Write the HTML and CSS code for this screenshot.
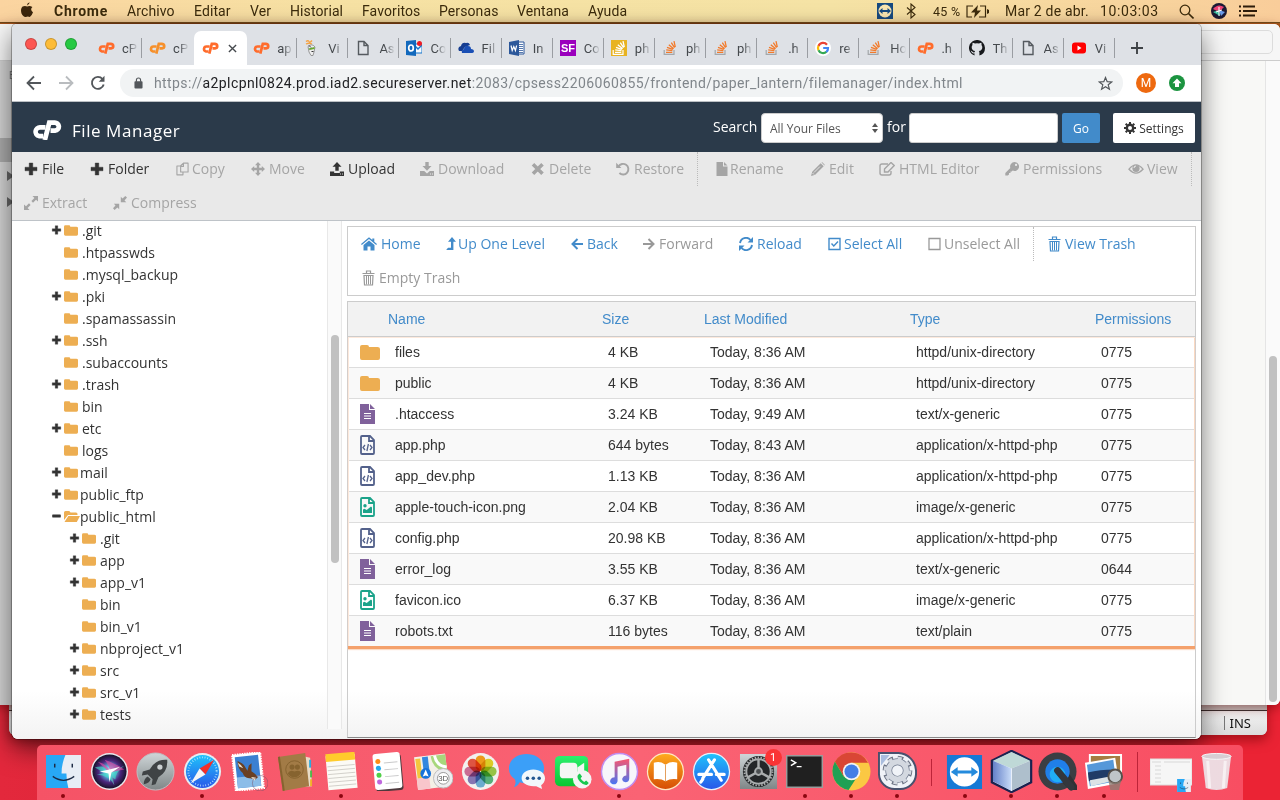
FILE: index.html
```html
<!DOCTYPE html>
<html lang="es">
<head>
<meta charset="utf-8">
<title>File Manager</title>
<link rel="stylesheet" href="styles.css">
</head>
<body>
<svg class="defs" width="0" height="0">
  <defs>
    <symbol id="cp" viewBox="0 0 30 20"><g fill="none" stroke="currentColor"><path d="M13.500 7.400H8a4.400 4.400 0 0 0-1 8.700h4.200" stroke-width="4.600"/><path d="M12.800 20L17.300 2.600h5.200a4 4 0 0 1 .6 8H18.500" stroke-width="4.800"/></g></symbol>
    <symbol id="plus" viewBox="0 0 14 14"><path d="M5.200 1h3.600v4.200H13v3.600H8.800V13H5.200V8.800H1V5.200h4.200z" fill="currentColor" stroke="currentColor" stroke-width=".4" stroke-linejoin="round"/></symbol>
    <symbol id="minus" viewBox="0 0 14 14"><rect x="1" y="5" width="12" height="4" rx=".6" fill="currentColor"/></symbol>
    <symbol id="copy" viewBox="0 0 14 14"><path d="M5 3.500L8 .7h5v9.600H5zM8 .7v3.500H5M5 3.800H1v9.500h6.500v-3" fill="none" stroke="currentColor" stroke-width="1.200" stroke-linejoin="round"/></symbol>
    <symbol id="move" viewBox="0 0 14 14"><path d="M7 0l3 3.200H8.200v2.600h2.600V4L14 7l-3.200 3V8.200H8.200v2.600H10L7 14l-3-3.200h1.800V8.200H3.200V10L0 7l3.200-3v1.800h2.600V3.200H4z" fill="currentColor"/></symbol>
    <symbol id="upload" viewBox="0 0 14 14"><path d="M7 0l4.500 4.800H8.700v4H5.300v-4H2.500zM0 9.500h4.200V11h5.600V9.500H14V14H0z" fill="currentColor"/><path d="M10 12h1M12 12h1" stroke="#fff" stroke-width=".8"/></symbol>
    <symbol id="download" viewBox="0 0 14 14"><path d="M5.300 0h3.400v4h2.800L7 8.800 2.500 4h2.800zM0 9h4.200L7 11.500 9.800 9H14v5H0z" fill="currentColor"/><path d="M10 12h1M12 12h1" stroke="#fff" stroke-width=".8"/></symbol>
    <symbol id="times" viewBox="0 0 14 14"><path d="M2 2.200l9.500 9.500M11.500 2.200L2 11.700" stroke="currentColor" stroke-width="3.600"/></symbol>
    <symbol id="undo" viewBox="0 0 14 14"><path d="M2.500 4.500A5.300 5.300 0 1 1 3.400 11" fill="none" stroke="currentColor" stroke-width="1.900"/><path d="M.2.800v5.200h5.200z" fill="currentColor"/></symbol>
    <symbol id="doc" viewBox="0 0 12 14"><path d="M.5 0H7v4.500h4.500V14H.5zM8 0l3.500 3.500H8z" fill="currentColor"/></symbol>
    <symbol id="pencil" viewBox="0 0 14 14"><path d="M9.700 1.200l3 3-8.500 8.600L0 14l1.200-4.200zM10.500.5Q11 0 11.600.5l1.900 1.900q.5.500 0 1z" fill="currentColor"/><path d="M3 10.500L9 4.500M1.500 11l1.500 1.500" stroke="#fff" stroke-width=".7"/></symbol>
    <symbol id="editor" viewBox="0 0 16 14"><path d="M9 2H3Q1 2 1 4v7q0 2 2 2h7q2 0 2-2V9" fill="none" stroke="currentColor" stroke-width="1.400"/><path d="M5.500 7l6.500-6.500 3.200 3L9 10H5.500z" fill="none" stroke="currentColor" stroke-width="1.400"/></symbol>
    <symbol id="key" viewBox="0 0 14 14"><path d="M9.500 0a4.500 4.500 0 1 1-1.800 8.600L6.800 9.600H5.500V11H4v1.500l-1.200 1H.3v-2.600l5-5A4.500 4.500 0 0 1 9.500 0zM11 1.800a1.100 1.100 0 1 0 .1 2.300 1.100 1.100 0 0 0-.1-2.300z" fill="currentColor" fill-rule="evenodd"/></symbol>
    <symbol id="eye" viewBox="0 0 16 14"><path d="M1 7.200Q8-1.500 15 7.200 8 15 1 7.200z" fill="none" stroke="currentColor" stroke-width="1.300"/><circle cx="8" cy="6.500" r="3.600" fill="currentColor"/><path d="M6 6a2 2 0 0 1 2-2" stroke="#fff" fill="none" stroke-width=".8"/></symbol>
    <symbol id="expand" viewBox="0 0 14 14"><path d="M8.500 0H14v5.500L12 3.700 9 6.700 7.400 5l3-3zM0 8.500L2 10.300l3-3L6.600 9l-3 3 1.900 2H0z" fill="currentColor"/></symbol>
    <symbol id="shrink" viewBox="0 0 14 14"><path d="M7.800.8l1.700 1.700L12.300 0 14 1.600l-2.500 2.900 1.800 1.700H7.800zM.8 7.800h5.400v5.400l-1.800-1.700L1.600 14 0 12.300l2.500-2.800z" fill="currentColor"/></symbol>
    <symbol id="home" viewBox="0 0 16 14"><path d="M8 3.600l5.500 4.500V13.500H9.500V9.500h-3v4h-4V8.100zM8 .3l3.300 2.700V1.500h2V4.700L16 7l-.8 1L8 2 .8 8 0 7z" fill="currentColor"/></symbol>
    <symbol id="levelup" viewBox="0 0 10 14"><path d="M6 0l4 4.700H7.400V13H.2l1.800-2.200H5V4.700H2z" fill="currentColor"/></symbol>
    <symbol id="left" viewBox="0 0 12 12"><path d="M6.500 1L1.500 6l5 5M2 6h10" fill="none" stroke="currentColor" stroke-width="2"/></symbol>
    <symbol id="right" viewBox="0 0 12 12"><path d="M5.500 1l5 5-5 5M10 6H0" fill="none" stroke="currentColor" stroke-width="2"/></symbol>
    <symbol id="reload" viewBox="0 0 14 14"><path d="M1 6A6 6 0 0 1 11.500 3M13 8A6 6 0 0 1 2.500 11" fill="none" stroke="currentColor" stroke-width="1.900"/><path d="M14 0v5.500H8.500zM0 14V8.500h5.500z" fill="currentColor"/></symbol>
    <symbol id="check" viewBox="0 0 13 13"><path d="M1 1h11v11H1zM3.500 6l2.300 2.500L10 4" fill="none" stroke="currentColor" stroke-width="1.400"/></symbol>
    <symbol id="square" viewBox="0 0 13 13"><path d="M1 1h11v11H1z" fill="none" stroke="currentColor" stroke-width="1.300"/></symbol>
    <symbol id="trash" viewBox="0 0 12 16"><path d="M0 3.500h12M4 3V1h4v2M1.500 5.500h9L10 15H2z" fill="none" stroke="currentColor" stroke-width="1.200"/><path d="M4 6v8.500M6 6v8.500M8 6v8.500" stroke="currentColor" stroke-width="1"/></symbol>
    <symbol id="folder" viewBox="0 0 20 15"><path d="M0 2Q0 0 2 0h5q2 0 2 2h8.500q2.500 0 2.500 2v9q0 2-2 2H2q-2 0-2-2z" fill="#edae52"/></symbol>
    <symbol id="open" viewBox="0 0 16 11"><path d="M0 9V1.500Q0 0 1.500 0H5q1 0 1.500 1.500H12q1.500 0 1.500 1.500v1H4z" fill="#edae52"/><path d="M4.300 5H16l-3.200 6H.5z" fill="#edae52"/></symbol>
    <symbol id="ftext" viewBox="0 0 15 20"><path d="M0 0h9v6h6v14H0zM10 0l5 5h-5z" fill="#80619b"/><path d="M4 9.500h7M4 12h7M4 14.500h7" stroke="#fff" stroke-width="1"/></symbol>
    <symbol id="fcode" viewBox="0 0 15 20"><path d="M1 2Q1 1 2 1h8l4 4v13q0 1-1 1H2q-1 0-1-1zM9 1v5h5" fill="none" stroke="#53618b" stroke-width="1.800"/><path d="M5 10l-2 2.500L5 15M10 10l2 2.500-2 2.500M8.400 9l-1.500 7" fill="none" stroke="#53618b" stroke-width="1.300"/></symbol>
    <symbol id="fimg" viewBox="0 0 15 20"><path d="M1 2Q1 1 2 1h8l4 4v13q0 1-1 1H2q-1 0-1-1zM9 1v5h5" fill="none" stroke="#1ba38a" stroke-width="1.800"/><circle cx="5" cy="8.800" r="1.700" fill="#1ba38a"/><path d="M3 16v-3.500l1.500-.8 2.200 1.300 4.300-3.500 1 1V16z" fill="#1ba38a"/></symbol>
    <symbol id="page" viewBox="0 0 16 16"><path d="M3.500 1.500H9l4 4v9H3.500zM9 1.500v4h4" fill="none" stroke="#555a5f" stroke-width="1.400"/></symbol>
    <symbol id="so" viewBox="0 0 16 16"><path d="M2.200 10v4.300h9.800V10" fill="none" stroke="var(--base)" stroke-width="1.200"/><path d="M4 12.300h6.300M4.200 9.800l6.200.8M5 7.300l5.800 2M6.800 4.700l4.800 4M9.300 2.600l3.300 5M12 1.200l1.300 6" stroke="var(--bars)" stroke-width="1.300"/></symbol>
    <symbol id="smile" viewBox="0 0 36 34"><path d="M0 0h36v34H0z" fill="#e7edf5"/><path d="M0 0h20q-4 9-4 19h5q0 8 2 15H0z" fill="#28a8f5"/><path d="M9 9v4M27 9v4" stroke="#1c2a44" stroke-width="1.500"/><path d="M7 22q11 8 22 0" fill="none" stroke="#1c2a44" stroke-width="1.300"/></symbol>
    <linearGradient id="gBlue" x2="0" y2="1"><stop stop-color="#1fc3fb"/><stop offset="1" stop-color="#2857e9"/></linearGradient>
    <linearGradient id="gOrange" x2="0" y2="1"><stop stop-color="#ffac1e"/><stop offset="1" stop-color="#d54c05"/></linearGradient>
    <linearGradient id="gGreen" x2="0" y2="1"><stop stop-color="#2bf06e"/><stop offset="1" stop-color="#0ac632"/></linearGradient>
    <linearGradient id="gGrey" x2="0" y2="1"><stop stop-color="#cfd6d8"/><stop offset="1" stop-color="#7f8687"/></linearGradient>
    <linearGradient id="gNote" x2="0" y2="1"><stop stop-color="#f9566f"/><stop offset="1" stop-color="#4676f4"/></linearGradient>
    <linearGradient id="gCube" x2="1"><stop stop-color="#6480c8"/><stop offset="1" stop-color="#c9dcf8"/></linearGradient>
    <radialGradient id="gSiri"><stop stop-color="#fff"/><stop offset=".3" stop-color="#5bc0e6"/><stop offset=".65" stop-color="#4b267c"/><stop offset="1" stop-color="#171229"/></radialGradient>
  </defs>
</svg>

<div class="desktop">
  <header class="menubar">
    <svg class="apple" viewBox="0 0 14 16"><path d="M9.600.2Q9.400 2.900 6.900 3.500 7 .9 9.600.2zM7.200 4.500Q9.500 3.200 12.400 5q-2.800 2.500.6 5.300-1.200 3.700-3.200 4.700-2-.8-4 0Q3.400 15.400 1.400 11.200.2 6.700 2.600 4.600q2.200-1.300 4.600-.1z" fill="#3c260c"/></svg>
    <nav class="menus"><b>Chrome</b><span>Archivo</span><span>Editar</span><span>Ver</span><span>Historial</span><span>Favoritos</span><span>Personas</span><span>Ventana</span><span>Ayuda</span></nav>
    <div class="status">
      <svg width="16" height="16" viewBox="0 0 16 16"><path d="M0 0h16v16H0z" fill="#174a80"/><circle cx="8" cy="8" r="6.500" fill="#fae5b0"/><path d="M2 8l3.500-3v2h5V5L14 8l-3.500 3V9h-5v2z" fill="#174a80"/></svg>
      <svg width="10" height="16" viewBox="0 0 10 16"><path d="M1 4.500l8 7-4 3.500V1l4 3.500-8 7" fill="none" stroke="#3c2b0c" stroke-width="1.100"/></svg>
      <span class="pct">45 %</span>
      <svg width="23" height="13" viewBox="0 0 23 13"><path d="M7 1H1v11h5M14 1h5.500v11H13" fill="none" stroke="#3c2b0c" stroke-width="1.200"/><path d="M12 0L5 7.500h4L8 13l7-7.500h-4zM21 4v5l2-1V5z" fill="#3c2b0c"/></svg>
      <span class="day">Mar 2 de abr.</span><span class="clock">10:03:03</span>
      <svg width="15" height="15" viewBox="0 0 15 15"><circle cx="6" cy="6" r="4.800" fill="none" stroke="#3c2b0c" stroke-width="1.300"/><path d="M9.500 9.500l5 5" stroke="#3c2b0c" stroke-width="1.600"/></svg>
      <svg width="16" height="16" viewBox="0 0 16 16"><circle cx="8" cy="8" r="8" fill="#1c1a33"/><path d="M2 6Q7 0 13 4L8 9z" fill="#ef4275"/><path d="M2 9l6-2 1 6z" fill="#38bd9c"/><path d="M8 7l6 2-4 4z" fill="#6b9be9"/><path d="M8 4v9M5 9l6-2" stroke="#fff"/></svg>
      <svg width="18" height="12" viewBox="0 0 18 12"><path d="M0 1.500h2M0 6h2M0 10.500h2M4 1.500h12M4 6h14M4 10.500h12" stroke="#2d1c0b" stroke-width="2"/></svg>
    </div>
  </header>

  <section class="win ide"><footer><i></i>INS</footer></section>
  <section class="win paper">
    <div class="ptop"><div class="field"></div></div>
    <div class="pbody"><div class="sliver"><em>E</em><b></b><i></i><i></i></div><div class="ptrack"><span></span></div></div>
  </section>

  <main class="win chrome">
    <div class="tabs">
      <div class="lights"><i></i><i></i><i></i></div>
      <div class="tab"><svg class="cpi"><use href="#cp"/></svg><span>cP</span></div>
      <div class="tab noline"><svg class="cpi amber"><use href="#cp"/></svg><span>cP</span></div>
      <div class="tab active"><svg class="cpi"><use href="#cp"/></svg><svg class="close" viewBox="0 0 10 10"><path d="M1 1l8 8M9 1L1 9" stroke="#45494d" stroke-width="1.500"/></svg></div>
      <div class="tab"><svg class="cpi"><use href="#cp"/></svg><span>ap</span></div>
      <div class="tab"><svg viewBox="0 0 16 16"><path d="M2 1.500q2-1.500 3 0t3-1M2 4q3-1.500 6 0" stroke="#f5a344" fill="none" stroke-width="1.300"/><path d="M4 6.500q4-3.500 7 .5l-1 5-1 3.500H7L5 12z" fill="#eee" stroke="#777" stroke-width=".7"/><path d="M4.500 8.500l6-1.500v2l-5 1z" fill="#67a82f"/><path d="M7.500 11.500h2M5 5.500l2 2" stroke="#333"/></svg><span>Vi</span></div>
      <div class="tab"><svg><use href="#page"/></svg><span>As</span></div>
      <div class="tab"><svg viewBox="0 0 16 16"><path d="M8 4h8v9H8z" fill="#f6fbff" stroke="#1675ca"/><path d="M8 5l4 4 4-4" fill="none" stroke="#1675ca" stroke-width="1.500"/><path d="M0 1l10-1v16L0 15z" fill="#1269bd"/><ellipse cx="5" cy="8" rx="2.300" ry="3" fill="none" stroke="#fff" stroke-width="1.700"/><circle cx="13.500" cy="3.500" r="2.500" fill="#ed1c24"/></svg><span>Co</span></div>
      <div class="tab"><svg viewBox="0 0 16 16"><path d="M1 11q-2-4 2-5 1-4 5-3 3-1 4 2l-5 2-3 4z" fill="#153d91"/><path d="M4 13q-1-3 2-4 1-4 4-3 3 0 3 3 3 0 3 2.500-.5 1.500-2 1.500z" fill="#1a4fb5"/></svg><span>Fil</span></div>
      <div class="tab"><svg viewBox="0 0 16 16"><path d="M9 2h6v12H9z" fill="#fff" stroke="#2b579a"/><path d="M10 4.500h4M10 6.500h4M10 8.500h4M10 10.500h4M10 12.500h4" stroke="#2b579a" stroke-width=".8"/><path d="M0 2l10-2v16L0 14z" fill="#2b579a"/><path d="M2 5.500l1.200 5 1.600-4 1.600 4 1.200-5" fill="none" stroke="#fff" stroke-width="1.200"/></svg><span>In</span></div>
      <div class="tab"><svg viewBox="0 0 16 16"><path d="M0 0h16v16H0z" fill="#9b00bd"/><text x="8" y="12.300" text-anchor="middle" class="sf">SF</text></svg><span>Co</span></div>
      <div class="tab"><svg class="gold"><use href="#so"/></svg><span>ph</span></div>
      <div class="tab"><svg class="so"><use href="#so"/></svg><span>ph</span></div>
      <div class="tab"><svg class="so"><use href="#so"/></svg><span>ph</span></div>
      <div class="tab"><svg class="so"><use href="#so"/></svg><span>.h</span></div>
      <div class="tab"><svg viewBox="0 0 16 16"><circle cx="8" cy="8" r="8" fill="#fff"/><g fill="none" stroke-width="2.200"><path d="M12 4.700A5 5 0 0 0 3.500 6" stroke="#ea4335"/><path d="M3.500 5.800a5 5 0 0 0 0 4.400" stroke="#fbbc05"/><path d="M3.500 10.200a5 5 0 0 0 8 1.500" stroke="#34a853"/><path d="M11.300 12A5 5 0 0 0 13 8H8.200" stroke="#4285f4"/></g></svg><span>re</span></div>
      <div class="tab"><svg class="so"><use href="#so"/></svg><span>Ho</span></div>
      <div class="tab"><svg class="cpi"><use href="#cp"/></svg><span>.h</span></div>
      <div class="tab"><svg viewBox="0 0 16 16"><path d="M5.500 15.600v-2.300q-2.300.7-3-1.300-.4-.8-1-1.200 1.300-.2 2 1 .7.900 2.100.5.100-.9.600-1.300Q2.700 10.500 2.700 7.200q0-1.300.8-2.200-.3-1.200.2-2.300 1.100 0 2.300.9 2-.5 4 0 1.200-.9 2.300-.9.500 1.200.1 2.300.9.900.9 2.200 0 3.300-3.500 3.800.6.500.6 1.600v3Q16 14 16 8A8 8 0 1 0 5.500 15.600z" fill="#17191c"/></svg><span>Th</span></div>
      <div class="tab"><svg><use href="#page"/></svg><span>As</span></div>
      <div class="tab"><svg viewBox="0 0 16 16"><rect x="1" y="2.500" width="14" height="11" rx="3" fill="#f00"/><path d="M6.500 5.500v5l4-2.500z" fill="#fff"/></svg><span>Vi</span></div>
      <svg class="newtab" viewBox="0 0 12 12"><path d="M6 0v12M0 6h12" stroke="#3e4246" stroke-width="1.900"/></svg>
    </div>
    <div class="address">
      <svg width="16" height="16" viewBox="0 0 16 16"><path d="M8 1.500L1.500 8 8 14.500M2 8h13" fill="none" stroke="#53575b" stroke-width="1.800"/></svg>
      <svg width="16" height="16" viewBox="0 0 16 16"><path d="M8 1.500L14.500 8 8 14.500M14 8H1" fill="none" stroke="#b9bcbf" stroke-width="1.800"/></svg>
      <svg width="16" height="16" viewBox="0 0 16 16"><path d="M13.700 9.500A6 6 0 1 1 12.500 4" fill="none" stroke="#53575b" stroke-width="1.900"/><path d="M14.500.8v6H8.700z" fill="#53575b"/></svg>
      <div class="url"><svg width="9" height="12" viewBox="0 0 10 13"><rect x=".5" y="4.500" width="9" height="8" rx="1" fill="#53575b"/><path d="M2.700 5V3.200a2.300 2.300 0 0 1 4.600 0V5" fill="none" stroke="#53575b" stroke-width="1.300"/></svg><p>https://<b>a2plcpnl0824.prod.iad2.secureserver.net</b>:2083/cpsess2206060855/frontend/paper_lantern/filemanager/index.html</p><svg width="15" height="15" viewBox="0 0 15 15"><path d="M7.500 1.500l1.700 4.200 4.500.3-3.500 2.800 1.200 4.400-3.900-2.500-3.900 2.500 1.200-4.400L1.300 6l4.500-.3z" fill="none" stroke="#53575b" stroke-width="1.200"/></svg></div>
      <span class="avatar">M</span>
      <svg width="16" height="16" viewBox="0 0 16 16"><circle cx="8" cy="8" r="8" fill="#1c9440"/><path d="M8 3.500l4.500 4.800H10V12H6V8.300H3.500z" fill="#fff"/></svg>
    </div>
    <div class="head">
      <svg class="logo"><use href="#cp"/></svg><h1>File Manager</h1>
      <label>Search</label><div class="select">All Your Files<svg width="6" height="10" viewBox="0 0 6 10"><path d="M3 0l3 4H0zM3 10l3-4H0z" fill="#555"/></svg></div><label class="for">for</label><div class="input"></div><div class="go">Go</div>
      <div class="settings"><svg width="12" height="12" viewBox="0 0 12 12"><circle cx="6" cy="6" r="3.200" fill="none" stroke="#333" stroke-width="2.400"/><path d="M6 0v2M6 10v2M0 6h2M10 6h2M1.700 1.700l1.500 1.500M8.800 8.800l1.500 1.500M10.300 1.700L8.800 3.200M3.200 8.800l-1.500 1.500" stroke="#333" stroke-width="2"/></svg>Settings</div>
    </div>
    <div class="toolbar">
      <div class="row one">
        <span class="on"><svg><use href="#plus"/></svg>File</span><span class="on"><svg><use href="#plus"/></svg>Folder</span><span class="n16"><svg><use href="#copy"/></svg>Copy</span><span><svg><use href="#move"/></svg>Move</span><span class="on"><svg><use href="#upload"/></svg>Upload</span><span><svg><use href="#download"/></svg>Download</span><span><svg><use href="#times"/></svg>Delete</span><span><svg><use href="#undo"/></svg>Restore</span><span class="n14 dot"><svg><use href="#doc"/></svg>Rename</span><span><svg><use href="#pencil"/></svg>Edit</span><span class="n20"><svg><use href="#editor"/></svg>HTML Editor</span><span><svg><use href="#key"/></svg>Permissions</span><span class="n19"><svg><use href="#eye"/></svg>View</span><i></i>
      </div>
      <div class="row two"><span><svg><use href="#expand"/></svg>Extract</span><span><svg><use href="#shrink"/></svg>Compress</span></div>
    </div>
    <div class="work">
      <aside>
        <ul>
          <li><svg class="pm"><use href="#plus"/></svg><svg><use href="#folder"/></svg>.git</li>
          <li class="leaf"><svg><use href="#folder"/></svg>.htpasswds</li>
          <li class="leaf"><svg><use href="#folder"/></svg>.mysql_backup</li>
          <li><svg class="pm"><use href="#plus"/></svg><svg><use href="#folder"/></svg>.pki</li>
          <li class="leaf"><svg><use href="#folder"/></svg>.spamassassin</li>
          <li><svg class="pm"><use href="#plus"/></svg><svg><use href="#folder"/></svg>.ssh</li>
          <li class="leaf"><svg><use href="#folder"/></svg>.subaccounts</li>
          <li><svg class="pm"><use href="#plus"/></svg><svg><use href="#folder"/></svg>.trash</li>
          <li class="leaf"><svg><use href="#folder"/></svg>bin</li>
          <li><svg class="pm"><use href="#plus"/></svg><svg><use href="#folder"/></svg>etc</li>
          <li class="leaf"><svg><use href="#folder"/></svg>logs</li>
          <li class="near"><svg class="pm"><use href="#plus"/></svg><svg><use href="#folder"/></svg>mail</li>
          <li class="near"><svg class="pm"><use href="#plus"/></svg><svg><use href="#folder"/></svg>public_ftp</li>
          <li class="near"><svg class="pm"><use href="#minus"/></svg><svg class="opened"><use href="#open"/></svg>public_html</li>
        </ul>
        <ul class="sub">
          <li><svg class="pm"><use href="#plus"/></svg><svg><use href="#folder"/></svg>.git</li>
          <li><svg class="pm"><use href="#plus"/></svg><svg><use href="#folder"/></svg>app</li>
          <li><svg class="pm"><use href="#plus"/></svg><svg><use href="#folder"/></svg>app_v1</li>
          <li class="leaf"><svg><use href="#folder"/></svg>bin</li>
          <li class="leaf"><svg><use href="#folder"/></svg>bin_v1</li>
          <li><svg class="pm"><use href="#plus"/></svg><svg><use href="#folder"/></svg>nbproject_v1</li>
          <li><svg class="pm"><use href="#plus"/></svg><svg><use href="#folder"/></svg>src</li>
          <li><svg class="pm"><use href="#plus"/></svg><svg><use href="#folder"/></svg>src_v1</li>
          <li><svg class="pm"><use href="#plus"/></svg><svg><use href="#folder"/></svg>tests</li>
        </ul>
      </aside>
      <div class="track"><span></span></div>
      <div class="content">
        <div class="actions">
          <div class="row"><span class="n20"><svg><use href="#home"/></svg>Home</span><span class="n13"><svg><use href="#levelup"/></svg>Up One Level</span><span class="n16 small"><svg><use href="#left"/></svg>Back</span><span class="n17 small off"><svg><use href="#right"/></svg>Forward</span><span><svg><use href="#reload"/></svg>Reload</span><span class="n16"><svg><use href="#check"/></svg>Select All</span><span class="n16 off"><svg><use href="#square"/></svg>Unselect All</span><span class="n17 dot tall"><svg><use href="#trash"/></svg>View Trash</span></div>
          <div class="row lower"><span class="n17 off tall"><svg><use href="#trash"/></svg>Empty Trash</span></div>
        </div>
        <div class="list">
          <div class="th"><span>Name</span><span>Size</span><span>Last Modified</span><span>Type</span><span>Permissions</span></div>
          <div class="rows">
            <div class="tr dir"><svg><use href="#folder"/></svg><span>files</span><span>4 KB</span><span>Today, 8:36 AM</span><span>httpd/unix-directory</span><span>0775</span></div>
            <div class="tr dir"><svg><use href="#folder"/></svg><span>public</span><span>4 KB</span><span>Today, 8:36 AM</span><span>httpd/unix-directory</span><span>0775</span></div>
            <div class="tr"><svg><use href="#ftext"/></svg><span>.htaccess</span><span>3.24 KB</span><span>Today, 9:49 AM</span><span>text/x-generic</span><span>0775</span></div>
            <div class="tr"><svg><use href="#fcode"/></svg><span>app.php</span><span>644 bytes</span><span>Today, 8:43 AM</span><span>application/x-httpd-php</span><span>0775</span></div>
            <div class="tr"><svg><use href="#fcode"/></svg><span>app_dev.php</span><span>1.13 KB</span><span>Today, 8:36 AM</span><span>application/x-httpd-php</span><span>0775</span></div>
            <div class="tr"><svg><use href="#fimg"/></svg><span>apple-touch-icon.png</span><span>2.04 KB</span><span>Today, 8:36 AM</span><span>image/x-generic</span><span>0775</span></div>
            <div class="tr"><svg><use href="#fcode"/></svg><span>config.php</span><span>20.98 KB</span><span>Today, 8:36 AM</span><span>application/x-httpd-php</span><span>0775</span></div>
            <div class="tr"><svg><use href="#ftext"/></svg><span>error_log</span><span>3.55 KB</span><span>Today, 8:36 AM</span><span>text/x-generic</span><span>0644</span></div>
            <div class="tr"><svg><use href="#fimg"/></svg><span>favicon.ico</span><span>6.37 KB</span><span>Today, 8:36 AM</span><span>image/x-generic</span><span>0775</span></div>
            <div class="tr"><svg><use href="#ftext"/></svg><span>robots.txt</span><span>116 bytes</span><span>Today, 8:36 AM</span><span>text/plain</span><span>0775</span></div>
          </div>
        </div>
      </div>
    </div>
  </main>

  <footer class="dock">
    <div class="app run"><svg viewBox="0 0 40 40"><svg x="2" y="3" width="36" height="34"><use href="#smile"/></svg></svg></div>
    <div class="app"><svg viewBox="0 0 40 40"><circle cx="20" cy="20" r="19" fill="#e8e8ee"/><circle cx="20" cy="20" r="17.500" fill="url(#gSiri)"/><path d="M5 16q15-6 20 18-5-10-18-11 14-1 28-9-9 7-9 14z" fill="#43dbc4" opacity=".65"/><path d="M8 10q16 4 16 26-1-18-9-28 12 4 20 10l-15 3z" fill="#e04aa4" opacity=".65"/><path d="M10 20l10-2 11-3-9 6-2 10-1-9z" fill="#fff"/></svg></div>
    <div class="app"><svg viewBox="0 0 40 40"><circle cx="20" cy="20" r="19" fill="url(#gGrey)" stroke="#bdbec2"/><path d="M32 8Q20 7 14 18l-7 2-1 4 6-1 5 5-1 6 4-1 3-7Q33 20 32 8zM12 25q-4 2-4 8 6-1 7-5z" fill="#3f4345"/><circle cx="24.500" cy="15.500" r="2.700" fill="#cbd0d2"/></svg></div>
    <div class="app run"><svg viewBox="0 0 40 40"><circle cx="20" cy="20" r="19" fill="#e6edf1"/><circle cx="20" cy="20" r="17" fill="url(#gBlue)"/><circle cx="20" cy="20" r="14.500" fill="none" stroke="#c8efff" stroke-width="2" stroke-dasharray=".7 2"/><path d="M32 8L17 17l6 6z" fill="#f22f29"/><path d="M8 32l9-15 6 6z" fill="#f5f6f7"/></svg></div>
    <div class="app"><svg viewBox="0 0 40 40"><g transform="rotate(-6 20 20)"><path d="M5 1.500h29v37H5z" fill="#fff" stroke="#fff" stroke-width="2" stroke-dasharray="1.500 1"/><path d="M7.500 4h24v32h-24z" fill="#3b80d1"/><path d="M7.500 25h24v11h-24z" fill="#8cbde8"/><path d="M10 8q4 2 6 5l3 6 2-5 3-2-1 8q4 3 6 7l-3 2-5-2q-6 0-7-6-5-5-4-13z" fill="#6a4022"/><path d="M10 10q3 2 5 6l-4-2zM22 26l5 1-2 3z" fill="#eadfca"/></g><circle cx="32" cy="32" r="8" fill="none" stroke="#7b5268" opacity=".5"/></svg></div>
    <div class="app"><svg viewBox="0 0 40 40"><path d="M28 4l8 2 2 29-8 1z" fill="#e9dcc6"/><path d="M35 8h2v8h-2z" fill="#2ea8dc"/><path d="M36 19h2v7h-2z" fill="#4fb94a"/><path d="M36 28h2v7h-2z" fill="#f1b228"/><path d="M3 5l28-4 4 34-27 5z" fill="#a27b46"/><path d="M3 5l2-.5 5 35-2 .5z" fill="#86632f"/><circle cx="20" cy="18" r="9" fill="none" stroke="#86632f"/><circle cx="17.500" cy="15.500" r="2.600" fill="#86632f"/><circle cx="23" cy="15.500" r="2.600" fill="#86632f"/><path d="M13 22q2-4 7-2 5-2 7 1-3 5-7 5t-7-4z" fill="#86632f"/></svg></div>
    <div class="app run"><svg viewBox="0 0 40 40"><g transform="rotate(-5 20 20)"><path d="M5 3h30v35H5z" fill="#fbfaf5"/><path d="M5 1h30v8H5z" fill="#ffcc2c"/><path d="M6 14h28M6 18h28M6 22h28M6 26h28M6 30h28M6 34h28" stroke="#c8c6c0" stroke-width=".8"/></g></svg></div>
    <div class="app"><svg viewBox="0 0 40 40"><g transform="rotate(-5 20 20)"><rect x="7" y="3" width="28" height="37" rx="3" fill="#4e393d"/><rect x="6" y="1" width="28" height="37" rx="3" fill="#fff"/><circle cx="11" cy="9" r="2.600" fill="#ff8b16"/><circle cx="11" cy="16" r="2.600" fill="#24a7ed"/><circle cx="11" cy="23" r="2.600" fill="#51cf48"/><circle cx="11" cy="30" r="2.600" fill="#bf67dd"/><path d="M17 11h14M17 18h14M17 25h14M17 32h14" stroke="#c9c9ca"/></g></svg></div>
    <div class="app"><svg viewBox="0 0 40 40"><g transform="rotate(-7 20 20)"><path d="M2 3h32v34H2z" fill="#f4f0e6"/><path d="M3 5h5v30H3z" fill="#f4c63e"/><path d="M10 4h6v20h-6z" fill="#3388df"/><path d="M19 4h15v17Q20 20 19 4z" fill="#a8d77b"/><path d="M23 4q1 11 11 13" fill="none" stroke="#fff" stroke-width="3"/><path d="M2 25h13v12H2z" fill="#f8c6cb"/></g><circle cx="12" cy="22" r="5.500" fill="#1772da"/><path d="M12 18l3 7-3-1-3 1z" fill="#fff"/><circle cx="30" cy="27" r="10" fill="#eeeef0" stroke="#bbb"/><circle cx="30" cy="27" r="6" fill="#fff" stroke="#999"/><text x="30" y="30" text-anchor="middle" class="three">3D</text></svg></div>
    <div class="app"><svg viewBox="0 0 40 40"><circle cx="20" cy="20" r="19" fill="#f2f1ef"/><g class="petals"><rect x="15" y="3.500" width="10" height="16" rx="5" fill="#faa21b"/><rect x="15" y="3.500" width="10" height="16" rx="5" fill="#e7d829" transform="rotate(45 20 20)"/><rect x="15" y="3.500" width="10" height="16" rx="5" fill="#9fce4a" transform="rotate(90 20 20)"/><rect x="15" y="3.500" width="10" height="16" rx="5" fill="#5bba81" transform="rotate(135 20 20)"/><rect x="15" y="3.500" width="10" height="16" rx="5" fill="#70b5dd" transform="rotate(180 20 20)"/><rect x="15" y="3.500" width="10" height="16" rx="5" fill="#8c7cbe" transform="rotate(225 20 20)"/><rect x="15" y="3.500" width="10" height="16" rx="5" fill="#d4739d" transform="rotate(270 20 20)"/><rect x="15" y="3.500" width="10" height="16" rx="5" fill="#ea5a46" transform="rotate(315 20 20)"/></g></svg></div>
    <div class="app"><svg viewBox="0 0 40 40"><path d="M20 2c10 0 18 6 18 15s-8 15-18 15q-4 0-7-1-2 4-6 5 3-4 1-8-6-4-6-11C2 8 10 2 20 2z" fill="#3b9ff8"/><path d="M27 18c7 0 12 4 12 9 0 3-2 6-4 7l1 4-6-3c-9 1-15-3-15-8s5-9 12-9z" fill="#f2f7fb"/><g fill="#235691"><circle cx="21" cy="27" r="1.800"/><circle cx="27" cy="27" r="1.800"/><circle cx="33" cy="27" r="1.800"/></g></svg></div>
    <div class="app"><svg viewBox="0 0 40 40"><rect x="2" y="4" width="34" height="31" rx="5" fill="url(#gGreen)"/><rect x="7" y="11" width="18" height="16" rx="4" fill="#f3f6f4"/><path d="M25 16l7-5v14l-7-3z" fill="#f3f6f4"/><circle cx="30" cy="28" r="9.500" fill="#f4f4f4"/><path d="M25.500 23.500l2-1.500 2.300 3-1.500 2q1 2.500 3.700 3.700l2-1.500 2.700 2.500-1.700 2q-3 1-7-3-4-4-2.500-7.200z" fill="#18c950"/></svg></div>
    <div class="app run"><svg viewBox="0 0 40 40"><circle cx="20" cy="20" r="18.500" fill="#f7f6fb" stroke="#c08df0" stroke-width="1.500"/><path d="M15 10l15-3v20q0 4-4 4-4-1-3-4 1-3 4-3V13l-9 2v15q-1 4-5 3-4-1-2-5 1-2 4-2z" fill="url(#gNote)"/></svg></div>
    <div class="app"><svg viewBox="0 0 40 40"><circle cx="20" cy="20" r="18.500" fill="url(#gOrange)" stroke="#ffe5c1" stroke-width="1.300"/><path d="M20 13q-5-4-12-2v17q7-1 12 2 5-3 12-2V11q-7-2-12 2z" fill="#fff"/><path d="M20 13v17" stroke="#e39c58"/></svg></div>
    <div class="app"><svg viewBox="0 0 40 40"><circle cx="20" cy="20" r="18.500" fill="url(#gBlue)" stroke="#e5f1fc" stroke-width="1.300"/><path d="M17 8l13 21M23 8L11 27M7 23h13M25 23h8M9 31l2-3" fill="none" stroke="#fff" stroke-width="3.200" stroke-linecap="round"/></svg></div>
    <div class="app"><svg viewBox="0 0 40 40"><path d="M1 2h38v36H1z" fill="url(#gGrey)"/><circle cx="20" cy="20" r="16" fill="#242729"/><circle cx="20" cy="20" r="12.500" fill="none" stroke="#a9adae" stroke-width="2"/><circle cx="20" cy="20" r="14.300" fill="none" stroke="#a9adae" stroke-width="2" stroke-dasharray="1.500 1.500"/><path d="M20 20V8M20 20L9 26M20 20l11 6" stroke="#a9adae" stroke-width="2.500"/><circle cx="20" cy="20" r="3.500" fill="#4b4f51" stroke="#a9adae" stroke-width="2"/></svg><b class="badge">1</b></div>
    <div class="app run"><svg viewBox="0 0 40 40"><path d="M1 3h38v34H1z" fill="#9b9b9b"/><path d="M2.500 4.500h35v31h-35z" fill="#202020"/><path d="M6 8l5 3-5 3" fill="none" stroke="#fff" stroke-width="1.500"/><path d="M12 15h5" stroke="#fff" stroke-width="1.300"/></svg></div>
    <div class="app run"><svg viewBox="0 0 40 40"><circle cx="20" cy="20" r="19.500" fill="#fbc843"/><path d="M3 10a19.500 19.500 0 0 1 34 1H20l-8 14z" fill="#d94635"/><path d="M3 10a19.500 19.500 0 0 0 14 29l9-14H12z" fill="#20a054"/><circle cx="20" cy="20" r="9" fill="#f4f4f4"/><circle cx="20" cy="20" r="7.200" fill="#437ee5"/></svg></div>
    <div class="app run"><svg viewBox="0 0 40 40"><path d="M1 1h20a19 19 0 0 1 18 18v4a16 16 0 0 1-16 15h-6A16 16 0 0 1 1 23z" fill="#f0f3f8" stroke="#48516d" stroke-width="2"/><path d="M3 3h9L3 14z" fill="#a9bdde"/><circle cx="20" cy="19" r="13" fill="none" stroke="#6d7484" stroke-width="4.500" stroke-dasharray="5.500 4.700"/><circle cx="20" cy="19" r="9" fill="none" stroke="#707a8e" stroke-width="7"/><circle cx="20" cy="19" r="12.500" fill="none" stroke="#d3d8e0" stroke-width="3.500" stroke-dasharray="4 5.800"/><circle cx="20" cy="19" r="9" fill="none" stroke="#d3d8e0" stroke-width="5.500"/></svg></div>
    <i class="sep short"></i>
    <div class="app run"><svg viewBox="0 0 40 40"><path d="M2 3h36v35H2z" fill="#1679d5"/><circle cx="20" cy="20.500" r="15" fill="#fff"/><path d="M6 20.500l7-5v3.500h14v-3.500l7 5-7 5V22H13v3.500z" fill="#258bdd"/></svg></div>
    <div class="app run big"><svg viewBox="0 0 44 44"><path d="M22 1l20 10v22L22 43 2 33V11z" fill="#fff" stroke="#1a2250" stroke-width="2.500"/><path d="M22 2l19 9-19 8-19-8z" fill="#bfd9d7"/><path d="M3 11l19 8v23L3 32z" fill="url(#gCube)"/><path d="M22 19l19-8v21L22 42z" fill="#aebfcc"/><path d="M22 19v23" stroke="#e8f0fa"/></svg></div>
    <div class="app run"><svg viewBox="0 0 40 40"><circle cx="20" cy="20" r="19.500" fill="#3b3e43"/><path d="M23 20l6-2 11 16v5h-7L20 27z" fill="#2f3236"/><circle cx="20" cy="20" r="12.500" fill="#207fe9"/><circle cx="20" cy="23" r="8" fill="#20c7fc" opacity=".65"/><path d="M20 19l14 17" stroke="#33373d" stroke-width="7" stroke-linecap="round"/></svg></div>
    <div class="app run"><svg viewBox="0 0 40 40"><path d="M6 3h32v22H6z" fill="#a57d43" stroke="#fff" stroke-width="2"/><path d="M1 11l31-5 4 26-32 6z" fill="#fff"/><path d="M3 13l27-5 3 22-27 5z" fill="#5598d9"/><path d="M4 21q12-3 27-3l1 7-27 5z" fill="#203c67"/><path d="M6 29l26-5v5L7 35z" fill="#dce3e6"/><circle cx="32" cy="25" r="7" fill="#bec5c8" stroke="#55504a" stroke-width="2"/><path d="M25 29q7 5 13 0l-2 10h-9z" fill="#8c7c72" opacity=".8"/></svg></div>
    <i class="sep"></i>
    <div class="app wide"><svg viewBox="0 0 42 40"><path d="M0 7h42v26H0z" fill="#f6f6f6" stroke="#ddd"/><path d="M2 10h9M5 14h6M5 18h6M5 22h6M5 26h6M5 30h6M14 10h26" stroke="#ccc" stroke-width=".7"/><svg x="27" y="27" width="14" height="13"><use href="#smile"/></svg></svg></div>
    <div class="app"><svg viewBox="0 0 40 40"><path d="M5 4q15-5 30 0l-4 33q-11 4-22 0z" fill="#ebe9ed" opacity=".9"/><ellipse cx="20" cy="4.500" rx="15" ry="3" fill="#d7cdd3" stroke="#f6f6f7"/><path d="M11 9l2 28M29 9l-2 28" stroke="#fff" stroke-width="3" opacity=".6"/></svg></div>
  </footer>
</div>
</body>
</html>
```
FILE: styles.css
```css
* { box-sizing: border-box; }
body { margin: 0; font-family: "Open Sans", sans-serif; color: #333; }
svg { display: block; flex: none; }
.defs { position: absolute; }
.desktop { position: relative; width: 1280px; height: 800px; overflow: hidden; background: linear-gradient(90deg, #e3283c, #d3202f 50%, #eb2334 92%); }
.desktop::before { content: ""; position: absolute; inset: 22px 0 auto; height: 30px; background: #a85a1c; }

.menubar { position: relative; display: flex; align-items: center; height: 23px; background: linear-gradient(90deg, #fbd4a0, #f6e1a3 25%, #f5e3a5 65%, #f9cd9a); border-bottom: 1px solid #70501c; font: 14px Roboto, sans-serif; color: #3c2b0c; }
.apple { width: 14px; height: 16px; margin: -2px 0 0 20px; }
.menus { display: grid; grid-template-columns: 73px 67px 56px 40px 72px 77px 78px 71px 60px; margin-left: 20px; white-space: nowrap; letter-spacing: .1px; }
.menus b { font-weight: 700; letter-spacing: .75px; }
.status { display: grid; grid-template-columns: 29px 27px 33px 40px 95px 78px 32px 28px 18px; align-items: center; margin-left: 229px; white-space: nowrap; }
.pct { font-size: 12.500px; letter-spacing: .3px; }
.day { letter-spacing: .2px; margin-left: -1px; }
.clock { letter-spacing: .6px; margin-left: -1px; }

.win { position: absolute; overflow: hidden; }
.ide { left: 9px; top: 640px; width: 1258px; height: 95px; border-radius: 0 0 6px 6px; background: #c5cac8; display: flex; flex-direction: column; justify-content: flex-end; box-shadow: 0 5px 12px #6008; }
.ide footer { height: 25px; border-top: 1px solid #333; background: linear-gradient(#f4f4f4, #dcdcdc); display: flex; align-items: center; justify-content: flex-end; padding-right: 16px; font: 13px "Noto Sans", sans-serif; color: #111; }
.ide i { width: 1px; height: 14px; margin-right: 5px; background: #777; }
.paper { left: -6px; top: 24px; width: 1286px; height: 681px; border-radius: 6px; background: #f8f8f6; box-shadow: 0 3px 12px #6008; }
.ptop { height: 37px; border-bottom: 1px solid #ccc; background: #f6f6f6; display: flex; justify-content: flex-end; padding: 6px 7px; }
.field { width: 120px; height: 24px; border: 1px solid #dcdcdc; border-radius: 5px; }
.pbody { display: flex; justify-content: space-between; height: 644px; }
.sliver { width: 18px; background: #d3d3d3; padding: 9px 0 0 15px; }
.sliver em { display: block; font: 10px Roboto, sans-serif; height: 68px; color: #777; }
.sliver b { display: block; height: 24px; margin-left: -15px; background: #aaa; }
.sliver i { display: block; margin: 9px 0 16px -2px; border: 5px solid transparent; border-left: 7px solid #666; border-right: 0; }
.ptrack { width: 15px; background: #fafafa; border-left: 1px solid #e5e5e5; padding: 295px 0 0 3px; }
.ptrack span { display: block; width: 8px; height: 346px; border-radius: 4px; background: #c1c1c1; }

.chrome { left: 12px; top: 24px; width: 1189px; height: 715px; border-radius: 5px 5px 6px 6px; background: #fff; box-shadow: 0 0 0 1px #0004, 0 10px 26px #0008; }
.tabs { display: flex; height: 41px; padding: 7px 0 0 13px; background: #dee1e6; }
.lights { display: flex; gap: 8px; width: 66px; padding-top: 7px; }
.lights i { width: 12px; height: 12px; border-radius: 50%; background: #fc5652; border: .5px solid #0003; }
.lights i:nth-child(2) { background: #fdbc38; }
.lights i:nth-child(3) { background: #26c943; }
.tab { display: flex; align-items: center; width: 51.100px; height: 34px; padding-left: 7px; background: linear-gradient(#9a9da2, #9a9da2) right 7px / 1px 20px no-repeat; font: 13px Roboto, sans-serif; color: #45494d; }
.tab svg { width: 16px; height: 16px; }
.tab .cpi { width: 17px; height: 12px; margin-right: -1px; color: #ff6c2c; }
.tab .amber { color: #f6902b; }
.tab span { margin-left: 8px; white-space: nowrap; -webkit-mask: linear-gradient(90deg, #000 6px, #0000 16px); mask: linear-gradient(90deg, #000 6px, #0000 16px); }
.tab.noline { background: none; }
.tab.active { width: 53px; background: #fff; border-radius: 7px 7px 0 0; margin: 0 -1px 0 1px; padding-left: 8px; }
.tab .close { width: 9px; height: 9px; margin-left: 10px; }
.sf { font: bold 11px "Liberation Sans", sans-serif; fill: #fff; }
.tab .so { --base: #a4a7aa; --bars: #f27b2c; }
.tab .gold { --base: #fff; --bars: #fff; background: #e8b321; }
.newtab { width: 12px; height: 12px; margin: 11px 0 0 16px; }
.address { display: flex; align-items: center; height: 36px; padding-left: 14px; }
.address > svg { margin-right: 16px; }
.url { display: flex; align-items: center; width: 1005px; height: 28px; margin-left: -2px; padding: 0 10px 0 14px; background: #f1f3f4; border-radius: 14px; font: 14px Roboto, sans-serif; color: #80868b; }
.url p { margin: 0 auto 0 11px; white-space: nowrap; letter-spacing: .4px; }
.url b { font-weight: 400; color: #202124; }
.avatar { width: 20px; height: 20px; margin: 0 13px 0 13px; border-radius: 50%; background: #ee690f; color: #fff; font: 12px/20px Roboto, sans-serif; text-align: center; }
.head { display: flex; align-items: center; height: 51px; padding: 0 6px 0 20px; border-top: 1px solid #bcc0c4; background: #2b3a4a; color: #fff; font-size: 14px; }
.logo { width: 32px; height: 20px; margin: 6px 0 0 -1px; }
h1 { width: 641px; margin: 6px 0 0 9px; font-size: 17px; font-weight: 400; letter-spacing: .55px; }
.select, .input, .go, .settings { height: 30px; display: flex; align-items: center; margin-top: 2px; border-radius: 3px; background: #fff; font-size: 12px; flex: none; }
.select { width: 122px; margin-left: 4px; padding: 0 4px 0 8px; justify-content: space-between; border: 1px solid #ccc; color: #555; border-radius: 4px; }
.head label { width: 44px; flex: none; margin-top: -1px; }
.head .for { width: 22px; margin-left: 4px; }
.input { width: 149px; border: 1px solid #ccc; }
.go { width: 38px; margin-left: 4px; justify-content: center; background: #428bca; border-radius: 2px; }
.settings { width: 82px; margin-left: 13px; color: #333; justify-content: center; gap: 3px; border-radius: 2px; }

.toolbar { height: 69px; background: #e9e9e9; border-bottom: 1px solid #bec3c8; }
.row { display: grid; height: 34px; font-size: 14px; white-space: nowrap; }
.row span { display: flex; align-items: center; padding-bottom: 1px; }
.row svg { width: 14px; height: 14px; margin-right: 4px; }
.toolbar .row { color: #a5a5a5; padding-left: 12px; }
.toolbar .on { color: #333; }
.one { grid-template-columns: 66px 86px 75px 79px 90px 111px 85px 82px 113px 68px 126px 123px 63px 1px; }
.one i { border-right: 1px dotted #bbb; }
.two { grid-template-columns: 89px 100px; }
.row .n13 svg { width: 10px; margin-right: 2px; }
.row .n14 svg { width: 12px; margin-right: 2px; }
.row .n16 svg { width: 13px; margin-right: 3px; }
.row .n17 svg { width: 12px; margin-right: 5px; }
.row .n19 svg { width: 16px; margin-right: 3px; }
.row .n20 svg { width: 16px; margin-right: 4px; }
.row .small svg { width: 12px; margin-right: 4px; }
.row .tall svg { width: 13px; height: 16px; margin-right: 4px; }
.row .dot { border-left: 1px dotted #bbb; }
.one .dot { padding-left: 18px; margin-left: -1px; }
.row .off { color: #999; }

.work { display: flex; height: 518px; background: linear-gradient(#fff 470px, #f3f3f3); }
aside { width: 315px; margin-top: -2px; }
ul { margin: 0; padding: 0 0 0 39px; list-style: none; font-size: 14px; }
.sub { padding-left: 57px; }
li { display: flex; align-items: center; height: 22px; }
li svg { width: 14px; height: 11px; margin-right: 4px; }
li .pm { width: 11px; height: 10px; margin-right: 2px; }
li.leaf { padding-left: 13px; }
li.near svg:nth-child(2) { margin-right: 2px; }
li.near svg.opened:nth-child(2) { width: 16px; margin-right: 0; }
.track { width: 15px; height: 508px; padding: 114px 0 0 3px; background: #fafafa; border: solid #e8e8e8; border-width: 0 1px; }
.track span { display: block; width: 8px; height: 228px; border-radius: 4px; background: #c1c1c1; }
.content { width: 849px; margin: 5px 0 0 5px; }
.actions { height: 70px; border: 1px solid #ccc; background: #fff; color: #428bca; }
.actions .row { grid-template-columns: 85px 125px 72px 96px 89px 100px 105px 100px; padding-left: 13px; }
.actions .lower { padding-left: 14px; }
.actions .dot { padding-left: 14px; }
.list { height: 437px; margin-top: 5px; border: 1px solid #ccc; border-bottom-color: #888; font: 14px "Liberation Sans", sans-serif; }
.th { display: grid; grid-template-columns: 214px 102px 206px 185px 1fr; align-items: center; height: 35px; padding-left: 40px; background: #f2f2f2; border-bottom: 1px solid #ccc; color: #428bca; }
.rows { height: 312px; border-bottom: 3px solid #f4a16c; box-shadow: inset 1px 1px #fde9dc, inset -1px 0 #fbd9c2, 0 1px 1px #fbdcc6; }
.tr { display: grid; grid-template-columns: 35px 213px 102px 206px 185px 1fr; align-items: center; height: 31px; margin: 0 1px; padding-left: 11px; border-bottom: 1px solid #ddd; }
.tr:nth-child(even) { background: #f9f9f9; }
.tr:last-child { height: 30px; border: 0; }
.tr svg { width: 15px; height: 20px; }
.dir svg { width: 20px; height: 15px; }

.dock { position: absolute; left: 37px; top: 745px; width: 1206px; height: 55px; display: grid; grid-template-columns: repeat(19, 46.350px) 21px repeat(4, 46.350px) 21px 46px 46px; align-items: start; padding-left: 3px; border-radius: 5px 5px 0 0; background: linear-gradient(90deg, #f55366, #fa6374 50%, #f84e62); }
.app { position: relative; height: 55px; padding-top: 7px; }
.app > svg { width: 39px; height: 39px; margin: 0 auto; }
.app.big > svg { width: 43px; height: 43px; margin-top: -2px; }
.app.wide > svg { width: 42px; height: 40px; }
.petals rect { mix-blend-mode: multiply; }
.run::after { content: ""; position: absolute; left: 21px; bottom: 2px; width: 4px; height: 4px; border-radius: 50%; background: #8b0610; }
.sep { width: 1px; height: 40px; margin: 7px auto 0; background: #bd2439; }
.sep.short { height: 27px; margin-top: 14px; }
.badge { position: absolute; right: 0; top: 4px; width: 17px; height: 17px; border-radius: 50%; background: #fa3435; color: #fff; font: 11px/17px Roboto, sans-serif; text-align: center; }
.three { font: 8px "Liberation Sans", sans-serif; fill: #555; }
```
